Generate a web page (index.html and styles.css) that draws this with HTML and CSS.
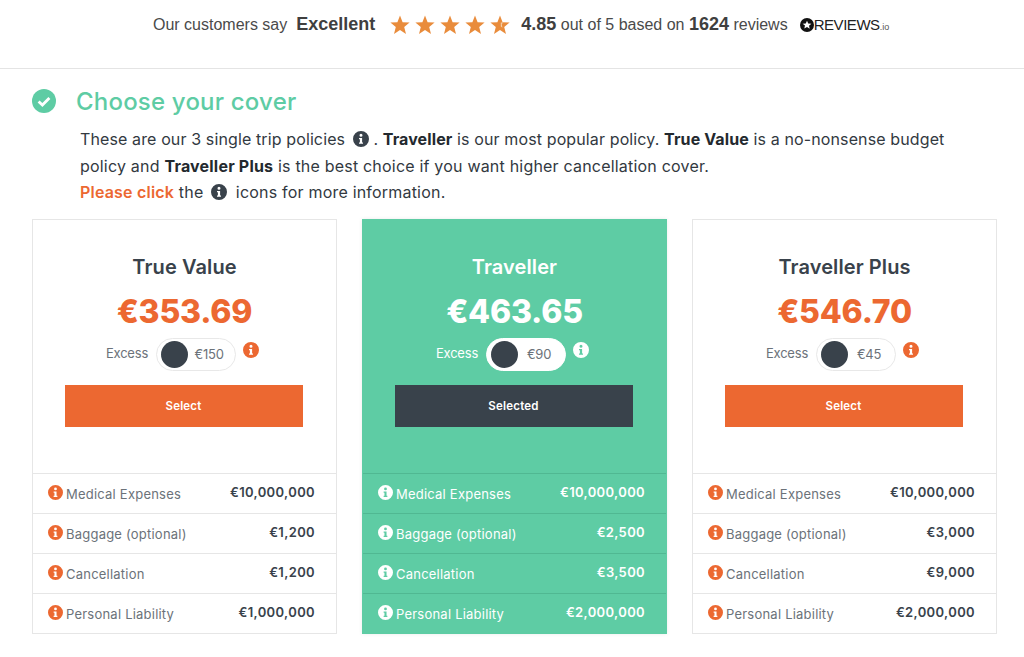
FILE: index.html
```html
<!DOCTYPE html>
<html lang="en">
<head>
<meta charset="utf-8">
<title>Choose your cover</title>
<link rel="stylesheet" href="styles.css">
</head>
<body>
<svg class="defs" width="0" height="0" aria-hidden="true">
  <symbol id="info" viewBox="0 0 16 16">
    <path fill-rule="evenodd" d="M8 0a8 8 0 1 1 0 16A8 8 0 0 1 8 0zM8 2.7a1.5 1.5 0 1 0 0 3 1.5 1.5 0 0 0 0-3zM6 6.9v1.3h.9v3.2H6v1.3h4v-1.3h-.9V6.9z"/>
  </symbol>
  <symbol id="star" viewBox="0 0 20 20">
    <path d="M10 .6l2.6 6.6 7 .4-5.4 4.5 1.8 6.9L10 15.1 4 19l1.8-6.9L.4 7.6l7-.4z"/>
  </symbol>
</svg>

<header class="reviews">
  <span>Our customers say</span>
  <b class="excellent">Excellent</b>
  <span class="stars">
    <svg class="star"><use href="#star"/></svg>
    <svg class="star"><use href="#star"/></svg>
    <svg class="star"><use href="#star"/></svg>
    <svg class="star"><use href="#star"/></svg>
    <svg class="star" viewBox="0 0 20 20"><path d="M10 .6l2.6 6.6 7 .4-5.4 4.5 1.8 6.9L10 15.1 4 19l1.8-6.9L.4 7.6l7-.4z"/><path class="star-cut" d="M10.8 7.5h2.6l-1.6 1.6.6 3.6-1.6-1.1z"/></svg>
  </span>
  <span class="score"><b class="big">4.85</b> out of 5 based on <b class="big">1624</b> reviews</span>
  <span class="brand">
    <svg class="brand-mark" viewBox="0 0 16 16"><circle cx="8" cy="8" r="8" fill="#111"/><path fill="#fff" d="M8 3l1.4 3.3 3.6.3-2.7 2.3.8 3.5L8 10.2l-3.1 1.9.8-3.5L3 6.6l3.6-.3z"/></svg><span>REVIEWS<small>.io</small></span>
  </span>
</header>

<main class="content">
  <div class="title-row">
    <svg class="check" viewBox="0 0 24 24"><circle cx="12" cy="12" r="12"/><path d="M6.6 12.4l3.8 3.7 7-7.2" fill="none" stroke="#fff" stroke-width="2.8"/></svg>
    <h1>Choose your cover</h1>
  </div>
  <div class="intro">
    <p class="tight">These are our 3 single trip policies <svg class="inline-info"><use href="#info"/></svg> . <b>Traveller</b> is our most popular policy. <b>True Value</b> is a no-nonsense budget</p>
    <p>policy and <b>Traveller Plus</b> is the best choice if you want higher cancellation cover.</p>
    <p><span class="click">Please click</span> the <svg class="inline-info spaced"><use href="#info"/></svg> icons for more information.</p>
  </div>

  <section class="cards">
    <article class="card">
      <div class="card-top">
        <h2>True Value</h2>
        <div class="price">€353.69</div>
        <div class="excess">
          <span class="excess-label">Excess</span>
          <span class="toggle"><i class="knob"></i><span class="amount">€150</span></span>
          <svg class="icon excess-info"><use href="#info"/></svg>
        </div>
        <div class="btn">Select</div>
      </div>
      <ul class="rows">
        <li><svg class="icon"><use href="#info"/></svg><span class="label">Medical Expenses</span><b>€10,000,000</b></li>
        <li><svg class="icon"><use href="#info"/></svg><span class="label">Baggage (optional)</span><b>€1,200</b></li>
        <li><svg class="icon"><use href="#info"/></svg><span class="label">Cancellation</span><b>€1,200</b></li>
        <li><svg class="icon"><use href="#info"/></svg><span class="label">Personal Liability</span><b>€1,000,000</b></li>
      </ul>
    </article>

    <article class="card selected">
      <div class="card-top">
        <h2>Traveller</h2>
        <div class="price">€463.65</div>
        <div class="excess">
          <span class="excess-label">Excess</span>
          <span class="toggle"><i class="knob"></i><span class="amount">€90</span></span>
          <svg class="icon excess-info"><use href="#info"/></svg>
        </div>
        <div class="btn">Selected</div>
      </div>
      <ul class="rows">
        <li><svg class="icon"><use href="#info"/></svg><span class="label">Medical Expenses</span><b>€10,000,000</b></li>
        <li><svg class="icon"><use href="#info"/></svg><span class="label">Baggage (optional)</span><b>€2,500</b></li>
        <li><svg class="icon"><use href="#info"/></svg><span class="label">Cancellation</span><b>€3,500</b></li>
        <li><svg class="icon"><use href="#info"/></svg><span class="label">Personal Liability</span><b>€2,000,000</b></li>
      </ul>
    </article>

    <article class="card">
      <div class="card-top">
        <h2>Traveller Plus</h2>
        <div class="price">€546.70</div>
        <div class="excess">
          <span class="excess-label">Excess</span>
          <span class="toggle"><i class="knob"></i><span class="amount">€45</span></span>
          <svg class="icon excess-info"><use href="#info"/></svg>
        </div>
        <div class="btn">Select</div>
      </div>
      <ul class="rows">
        <li><svg class="icon"><use href="#info"/></svg><span class="label">Medical Expenses</span><b>€10,000,000</b></li>
        <li><svg class="icon"><use href="#info"/></svg><span class="label">Baggage (optional)</span><b>€3,000</b></li>
        <li><svg class="icon"><use href="#info"/></svg><span class="label">Cancellation</span><b>€9,000</b></li>
        <li><svg class="icon"><use href="#info"/></svg><span class="label">Personal Liability</span><b>€2,000,000</b></li>
      </ul>
    </article>
  </section>
</main>
</body>
</html>
```

FILE: styles.css
```css
* { box-sizing: border-box; }
html, body { margin: 0; padding: 0; }
body {
  width: 1024px;
  height: 657px;
  overflow: hidden;
  background: #fff;
  font-family: "Inter", "Liberation Sans", sans-serif;
  color: #39424b;
}
.defs { position: absolute; }

/* review strip */
.reviews {
  height: 69px;
  border-bottom: 1px solid #e4e4e4;
  padding: 0 0 19px 153px;
  display: flex;
  align-items: center;
  font-family: "Liberation Sans", Arial, sans-serif;
  font-size: 16px;
  color: #4a4a4a;
}
.excellent { font-size: 18px; color: #3f3f3f; margin-left: 9px; }
.stars { display: flex; gap: 5px; margin-left: 15px; }
.star { width: 20px; height: 20px; fill: #e98c3c; display: block; }
.star-cut { fill: #f4cfa9; }
.score { margin-left: 11px; }
.big { font-size: 18px; color: #3f3f3f; }
.brand {
  margin-left: 12px;
  display: flex;
  align-items: center;
  color: #222;
  font-size: 15px;
  letter-spacing: -.45px;
}
.brand-mark { width: 14px; height: 14px; }
.brand small { font-size: 9px; letter-spacing: 0; color: #555; }

/* heading */
.content { padding: 0 27px 0 32px; }
.title-row { display: flex; align-items: center; height: 24px; margin-top: 20px; }
.check { width: 24px; height: 24px; fill: #5ecca4; flex: none; }
h1 {
  margin: 2px 0 0 20px;
  font-size: 24px;
  font-weight: 500;
  letter-spacing: .2px;
  color: #5ecca4;
  line-height: 24px;
}
.intro {
  margin: 13px 0 13px 48px;
  font-size: 16px;
  line-height: 26.5px;
  letter-spacing: .2px;
  color: #32393f;
}
.intro p { margin: 0; white-space: nowrap; }
.intro .tight { letter-spacing: .12px; }
.intro b { font-weight: 700; color: #23292e; }
.inline-info { width: 16px; height: 16px; fill: #39424b; vertical-align: -2px; margin-left: 3px; }
.inline-info.spaced { margin-right: 4px; }
.click { color: #ec6831; font-weight: 600; }

/* cards */
.cards { display: flex; gap: 25px; }
.card {
  width: 305px;
  height: 415px;
  background: #fff;
  border: 1px solid #e6e6e6;
  display: flex;
  flex-direction: column;
  --accent: #ec6831;
}
.card-top {
  height: 253px;
  padding-top: 35px;
  display: flex;
  flex-direction: column;
  align-items: center;
}
h2 {
  margin: 0;
  font-size: 20px;
  line-height: 24px;
  font-weight: 600;
  letter-spacing: .1px;
  color: #39424b;
}
.price {
  margin-top: 14px;
  font-size: 32px;
  line-height: 38px;
  font-weight: 800;
  color: var(--accent);
  letter-spacing: -.2px;
}
.excess {
  margin: 7px 4px 0 0;
  height: 33px;
  display: flex;
  align-items: center;
  font-size: 13px;
  letter-spacing: -.2px;
  color: #6b7279;
}
.excess-label { margin-bottom: 2px; }
.toggle {
  width: 80px;
  height: 33px;
  margin: 0 7px 0 8px;
  border: 1px solid #e8e8e8;
  border-radius: 17px;
  background: #fff;
  display: flex;
  align-items: center;
  padding-left: 4px;
}
.knob { width: 27px; height: 27px; border-radius: 50%; background: #39424b; flex: none; }
.amount { flex: 1; text-align: center; color: #6b7279; font-size: 13px; padding-right: 5px; }
.icon { width: 15px; height: 15px; fill: var(--accent); flex: none; }
.excess-info { width: 16px; height: 16px; margin-top: -8px; }
.btn {
  margin: 14px 2px 0 0;
  width: 238px;
  height: 42px;
  background: #ec6831;
  color: #fff;
  font-size: 11.5px;
  font-weight: 600;
  letter-spacing: .2px;
  display: flex;
  align-items: center;
  justify-content: center;
}
.rows { list-style: none; margin: 0; padding: 0; }
.rows li {
  height: 40px;
  border-top: 1px solid #e6e6e6;
  padding: 0 21px 2px 15px;
  display: flex;
  align-items: center;
  font-size: 13px;
}
.label { margin-left: 3px; flex: 1; color: #6b7279; padding-top: 3px; letter-spacing: .22px; }
.rows b { font-weight: 600; color: #39424b; font-size: 13px; letter-spacing: .35px; }

/* selected card */
.selected {
  background: #5ecca4;
  border-color: #5ecca4;
  box-shadow: 0 0 4px rgba(0,0,0,.08);
  --accent: #fff;
}
.selected h2 { color: #fff; }
.selected .excess { color: #fff; }
.selected .btn { background: #39424b; }
.selected .toggle { border-color: #fff; }
.selected .rows li { border-top-color: #50b892; }
.selected .label, .selected .rows b { color: #fff; }
```
